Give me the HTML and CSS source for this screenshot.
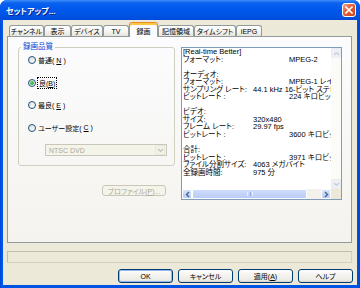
FILE: index.html
```html
<!DOCTYPE html>
<html lang="ja">
<head>
    <meta charset="UTF-8">
    <meta name="viewport" content="width=device-width, initial-scale=1.0">
    <title>セットアップ...</title>
    <link rel="stylesheet" href="styles.css">
</head>
<body>
    <div class="window">
        <div class="titlebar">
            <span class="titlebar__text">セットアップ...</span>
            <button class="titlebar__close" aria-label="閉じる">
                <svg width="8" height="8" viewBox="0 0 8 8"><path d="M1 1L7 7M7 1L1 7" stroke="#fff" stroke-width="1.6" stroke-linecap="square"/></svg>
            </button>
        </div>

        <div class="client">
            <div class="tabs">
                <div class="tab tab--ch">チャンネル</div>
                <div class="tab tab--disp">表示</div>
                <div class="tab tab--dev">デバイス</div>
                <div class="tab tab--tv">TV</div>
                <div class="tab tab--active">録画</div>
                <div class="tab tab--store">記憶領域</div>
                <div class="tab tab--shift">タイムシフト</div>
                <div class="tab tab--epg">iEPG</div>
            </div>

            <div class="panel">
                <div class="panel__left">
                    <fieldset class="group">
                        <legend class="group__title">録画品質</legend>
                        <label class="radio"><span class="radio__dot"></span>普通(<u>N</u>)</label>
                        <label class="radio"><span class="radio__dot radio__dot--on"></span><span class="radio__focus">良(<u>B</u>)</span></label>
                        <label class="radio"><span class="radio__dot"></span>最良(<u>E</u>)</label>
                        <label class="radio"><span class="radio__dot"></span>ユーザー設定(<u>C</u>)</label>
                        <div class="combo">
                            <span class="combo__text">NTSC DVD</span>
                            <span class="combo__btn">
                                <svg width="7" height="5" viewBox="0 0 7 5"><path d="M1 1L3.5 3.5L6 1" fill="none" stroke="#c4c2b6" stroke-width="1.2"/></svg>
                            </span>
                        </div>
                    </fieldset>
                    <button class="btn btn--small" disabled>プロファイル(<u>P</u>)...</button>
                </div>

                <div class="info">
                    <div class="info__text">
                        <div class="info__line">[Real-time Better]</div>
                        <div class="info__line"><span class="info__key">フォーマット:</span><span class="info__val info__val--far">MPEG-2</span></div>
                        <div class="info__line"></div>
                        <div class="info__line">オーディオ:</div>
                        <div class="info__line"><span class="info__key">フォーマット:</span><span class="info__val info__val--far">MPEG-1 レイヤー 2</span></div>
                        <div class="info__line"><span class="info__key">サンプリング レート:</span><span class="info__val">44.1 kHz 16-ビット ステレオ</span></div>
                        <div class="info__line"><span class="info__key">ビットレート :</span><span class="info__val info__val--far">224 キロビット/秒</span></div>
                        <div class="info__line"></div>
                        <div class="info__line">ビデオ:</div>
                        <div class="info__line"><span class="info__key">サイズ:</span><span class="info__val">320x480</span></div>
                        <div class="info__line"><span class="info__key">フレーム レート:</span><span class="info__val">29.97 fps</span></div>
                        <div class="info__line"><span class="info__key">ビットレート :</span><span class="info__val info__val--far">3600 キロビット/秒</span></div>
                        <div class="info__line"></div>
                        <div class="info__line">合計:</div>
                        <div class="info__line"><span class="info__key">ビットレート :</span><span class="info__val info__val--far">3971 キロビット/秒</span></div>
                        <div class="info__line"><span class="info__key">ファイル分割サイズ:</span><span class="info__val">4063 メガバイト</span></div>
                        <div class="info__line"><span class="info__key">全録画時間:</span><span class="info__val">975 分</span></div>
                    </div>
                    <div class="vscroll">
                        <span class="vscroll__btn">
                            <svg width="7" height="5" viewBox="0 0 7 5"><path d="M1 4L3.5 1.5L6 4" fill="none" stroke="#c9cbd4" stroke-width="1.2"/></svg>
                        </span>
                        <span class="vscroll__btn">
                            <svg width="7" height="5" viewBox="0 0 7 5"><path d="M1 1L3.5 3.5L6 1" fill="none" stroke="#c9cbd4" stroke-width="1.2"/></svg>
                        </span>
                    </div>
                    <div class="hscroll">
                        <span class="hscroll__btn">
                            <svg width="5" height="7" viewBox="0 0 5 7"><path d="M4 1L1.5 3.5L4 6" fill="none" stroke="#4d6185" stroke-width="1.4"/></svg>
                        </span>
                        <span class="hscroll__thumb"><span class="hscroll__grip"></span></span>
                        <span class="hscroll__track"></span>
                        <span class="hscroll__btn">
                            <svg width="5" height="7" viewBox="0 0 5 7"><path d="M1 1L3.5 3.5L1 6" fill="none" stroke="#4d6185" stroke-width="1.4"/></svg>
                        </span>
                    </div>
                    <div class="info__corner"></div>
                </div>
            </div>

            <div class="statusbar"></div>

            <div class="actions">
                <button class="btn btn--default">OK</button>
                <button class="btn">キャンセル</button>
                <button class="btn">適用(<u>A</u>)</button>
                <button class="btn">ヘルプ</button>
            </div>
        </div>
    </div>
</body>
</html>
```

FILE: styles.css
```css
* {
    box-sizing: border-box;
}
body {
    margin: 0;
    background: #fff;
    color: #000;
    font-family: 'Liberation Sans', 'Noto Sans CJK JP', sans-serif;
    font-size: 7px;
    font-feature-settings: "palt";
}
u {
    text-decoration-thickness: 1px;
    text-underline-offset: 1px;
}
.window {
    width: 360px;
    height: 288px;
    display: flex;
    flex-direction: column;
    background: linear-gradient(90deg, #0046d5, #0058ee 2px, #0054e3 3px, #0054e3 357px, #0046d5);
    border-radius: 7px 7px 0 0;
    overflow: hidden;
}
.titlebar {
    height: 20px;
    flex: none;
    display: flex;
    align-items: center;
    justify-content: space-between;
    padding: 0 4px 0 6px;
    background: linear-gradient(#3d8ef8 0%, #0a62ee 15%, #0058ee 45%, #0054e3 75%, #004ad8 100%);
}
.titlebar__text {
    color: #fff;
    font-weight: bold;
    font-size: 8px;
    text-shadow: 1px 1px #0a1e8c;
}
.titlebar__close {
    width: 14px;
    height: 14px;
    padding: 0;
    border: 1px solid #fff;
    border-radius: 3px;
    background: linear-gradient(135deg, #f3a489, #e45c32 45%, #cf4519);
    display: flex;
    align-items: center;
    justify-content: center;
}

/* client area */
.client {
    flex: 1;
    margin: 0 3px 3px;
    padding: 2px 5px 0 4px;
    background: #ece9d8;
    display: flex;
    flex-direction: column;
}
.tabs {
    height: 14px;
    display: flex;
    align-items: flex-end;
    padding-left: 2px;
}
.tab {
    height: 11px;
    display: flex;
    align-items: center;
    justify-content: center;
    border: 1px solid #919b9c;
    border-bottom: none;
    border-radius: 3px 3px 0 0;
    background: linear-gradient(#fff, #f3f2ee 60%, #e6e4db);
    white-space: nowrap;
}
.tab--ch { width: 35px; }
.tab--disp { width: 27px; }
.tab--dev { width: 32px; }
.tab--tv { width: 26px; }
.tab--store { width: 36px; }
.tab--shift { width: 42px; }
.tab--epg { width: 26px; }
.tab--active {
    width: 29px;
    height: 15px;
    margin-bottom: -1px;
    position: relative;
    z-index: 1;
    border-top: 1px solid #e68b2c;
    box-shadow: inset 0 2px #ffc83c;
    background: #fcfcfe;
    padding-top: 2px;
}

.panel {
    height: 207px;
    flex: none;
    display: flex;
    gap: 6px;
    padding: 5px 9px 0 10px;
    border: 1px solid #919b9c;
    background: linear-gradient(#fcfcfe, #f4f3ee);
}
.panel__left {
    width: 158px;
    display: flex;
    flex-direction: column;
}
.group {
    margin: 0;
    padding: 2.5px 7px 9px 9px;
    border: 1px solid #d0d0bf;
    border-radius: 3px;
}
.group__title {
    margin-left: -7px;
    padding: 0 2px;
    line-height: 10px;
    font-size: 7.5px;
    color: #0046d5;
}
.radio {
    height: 11px;
    display: flex;
    align-items: center;
    gap: 2px;
    margin-bottom: 11.5px;
    white-space: nowrap;
}
.radio__dot {
    width: 8px;
    height: 8px;
    flex: none;
    border: 1px solid #1c5180;
    border-radius: 50%;
    background: linear-gradient(135deg, #dcdcd7, #fff);
    display: flex;
    align-items: center;
    justify-content: center;
}
.radio__dot--on::after {
    content: "";
    width: 4px;
    height: 4px;
    border-radius: 50%;
    background: radial-gradient(circle at 35% 35%, #5bd25b, #21a121);
}
.radio__focus {
    outline: 1px dotted #000;
    outline-offset: 0;
    padding: 0 1px;
}
.combo {
    height: 12px;
    margin: -0.5px 0 0 17px;
    display: flex;
    align-items: center;
    border: 1px solid #c9c7ba;
    background: #f5f4ea;
    color: #aca899;
}
.combo__text {
    flex: 1;
    padding-left: 3px;
}
.combo__btn {
    width: 10px;
    height: 10px;
    margin-right: 1px;
    display: flex;
    align-items: center;
    justify-content: center;
    border: 1px solid #e8e7de;
    border-radius: 1px;
    background: #f2f1ea;
}

.btn {
    width: 55px;
    height: 14px;
    padding: 0;
    border: 1px solid #003c74;
    border-radius: 3px;
    background: linear-gradient(#fff, #f4f3ef 40%, #ecebe6 85%, #d6d0c5);
    font: inherit;
    color: #000;
    white-space: nowrap;
}
.btn--default {
    box-shadow: inset 0 0 0 1px #98b8ea;
}
.btn--small {
    width: 64px;
    height: 11px;
    margin: 19px 9px 0 0;
    align-self: flex-end;
    border-color: #c9c7ba;
    background: #f5f4ea;
    color: #aca899;
}

/* info box */
.info {
    width: 162px;
    height: 153px;
    margin-top: 5px;
    display: grid;
    grid-template-columns: 1fr 10px;
    grid-template-rows: 1fr 10px;
    border: 1px solid #7f9db9;
    background: #fff;
}
.info__text {
    overflow: hidden;
    padding-left: 1px;
    font-size: 7.5px;
    white-space: nowrap;
}
.info__line {
    height: 7.56px;
    line-height: 7.56px;
}
.info__key {
    display: inline-block;
    width: 70px;
}
.info__val--far {
    margin-left: 36px;
}
.vscroll {
    display: flex;
    flex-direction: column;
    justify-content: space-between;
    background: #fbfbf8;
}
.vscroll__btn {
    height: 10px;
    display: flex;
    align-items: center;
    justify-content: center;
    border: 1px solid #e8ebf2;
    border-radius: 2px;
    background: #eef0f6;
}
.hscroll {
    display: flex;
    background: #f3f1ec;
}
.hscroll__btn {
    width: 10px;
    display: flex;
    align-items: center;
    justify-content: center;
    border: 1px solid #fff;
    border-radius: 2px;
    background: linear-gradient(#d6e3fd, #b9cdf8);
}
.hscroll__thumb {
    width: 115px;
    display: flex;
    align-items: center;
    justify-content: center;
    border: 1px solid #fff;
    border-radius: 2px;
    background: linear-gradient(#cddcfc, #b8ccf6);
}
.hscroll__grip {
    width: 6px;
    height: 4px;
    border-left: 1px solid #e8effd;
    border-right: 1px solid #e8effd;
    background: linear-gradient(90deg, transparent 2px, #8fa9e0 2px, #8fa9e0 3px, transparent 3px);
}
.hscroll__track {
    flex: 1;
}
.info__corner {
    background: #ece9d8;
}

.statusbar {
    height: 12px;
    margin-top: 8px;
    border: 1px solid #d5d2c2;
    border-top-color: #c2bfad;
    border-left-color: #c2bfad;
    background: #ece9d8;
}
.actions {
    margin: 6px -1px 0 0;
    display: flex;
    justify-content: flex-end;
    gap: 5px;
}
```
